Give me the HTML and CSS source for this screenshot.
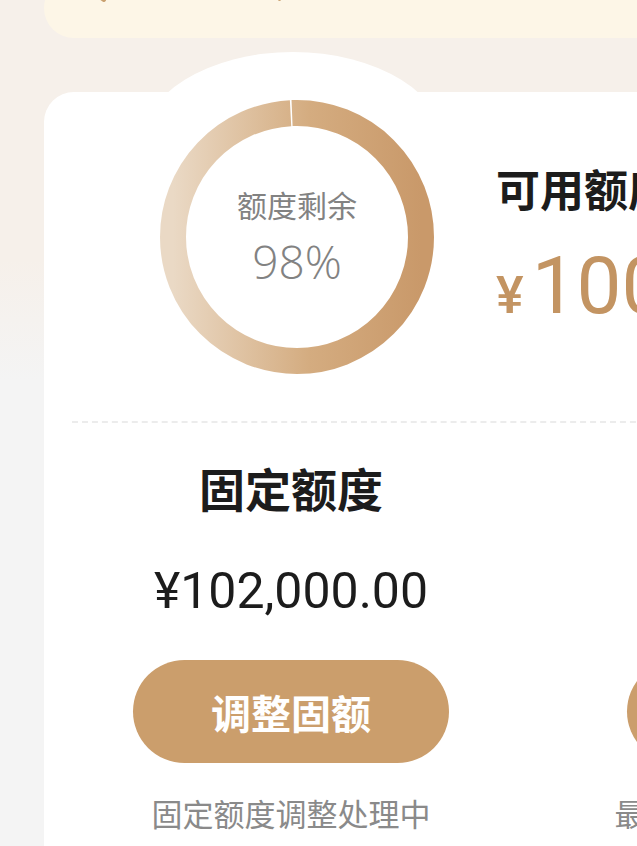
FILE: index.html
```html
<!DOCTYPE html>
<html lang="zh-CN">
<head>
  <meta charset="UTF-8"/>
  <title>额度管理</title>
  <link rel="stylesheet" href="styles.css">
</head>
<body>

  <div class="page">
    <div class="notice">
      <svg class="notice-icon" width="20" height="14" viewBox="0 0 20 14">
        <path d="M2 2 L11 8" stroke="#c9a06f" stroke-width="4" stroke-linecap="round" fill="none"/>
      </svg>
      <span class="notice-dot"></span>
    </div>

    <div class="card-wrap">
      <div class="card-bump"></div>
      <div class="card">
        <div class="summary">
          <div class="ring">
            <svg width="274" height="274" viewBox="0 0 274 274">
              <defs>
                <linearGradient id="ringGrad" gradientUnits="userSpaceOnUse" x1="13" y1="0" x2="261" y2="0">
                  <stop offset="0" stop-color="#ead9c5"/>
                  <stop offset="0.55" stop-color="#d4ac80"/>
                  <stop offset="1" stop-color="#c9996a"/>
                </linearGradient>
              </defs>
              <circle cx="137" cy="137" r="124" fill="none" stroke="url(#ringGrad)" stroke-width="26"
                      stroke-dasharray="777.6 1.5" stroke-dashoffset="200"/>
            </svg>
            <div class="ring-text">
              <div class="ring-label">额度剩余</div>
              <div class="ring-value">98%</div>
            </div>
          </div>
          <div class="available">
            <div class="available-title">可用额度</div>
            <div class="available-amount"><span class="yen">¥</span>100,000.00</div>
          </div>
        </div>

        <div class="divider"></div>

        <div class="limits">
          <div class="limit">
            <div class="limit-title">固定额度</div>
            <div class="limit-amount">¥102,000.00</div>
            <button class="limit-btn">调整固额</button>
            <div class="limit-note">固定额度调整处理中</div>
          </div>
          <div class="limit">
            <div class="limit-title">临时额度</div>
            <div class="limit-amount">¥0.00</div>
            <button class="limit-btn">申请临额</button>
            <div class="limit-note">最快一个工作日完成审核</div>
          </div>
        </div>
      </div>
    </div>
  </div>

</body>
</html>
```

FILE: styles.css
```css
html, body {
  margin: 0;
  padding: 0;
}

body {
  width: 637px;
  height: 846px;
  overflow: hidden;
  font-family: "Noto Sans CJK SC", "Noto Sans", sans-serif;
  background: linear-gradient(180deg, #f6f0ea 0px, #f6f0ea 260px, #f4f4f4 380px);
}

.page {
  width: 1100px;
  padding-left: 44px;
}

.notice {
  position: relative;
  height: 60px;
  margin-top: -22px;
  background: #fdf6e7;
  border-radius: 30px;
}

.notice-icon {
  position: absolute;
  left: 49px;
  top: 14px;
}

.notice-dot {
  position: absolute;
  left: 234px;
  top: 20px;
  width: 3px;
  height: 3px;
  border-radius: 50%;
  background: #c9a06f;
}

.card-wrap {
  position: relative;
  margin-top: 54px;
}

.card-bump {
  position: absolute;
  left: 96px;
  top: -40px;
  width: 306px;
  height: 190px;
  border-radius: 50%;
  background: #fff;
}

.card {
  position: relative;
  background: #fff;
  border-radius: 30px;
  min-height: 800px;
}

.summary {
  display: flex;
  align-items: flex-start;
  padding: 8px 0 0 116px;
}

.ring {
  position: relative;
  width: 274px;
  height: 274px;
}

.ring svg {
  display: block;
}

.ring-text {
  position: absolute;
  left: 0;
  right: 0;
  top: 0;
  bottom: 0;
  display: flex;
  flex-direction: column;
  align-items: center;
  justify-content: center;
  color: #828282;
  padding-top: 2px;
  box-sizing: border-box;
}

.ring-label {
  font-size: 30px;
  line-height: 40px;
}

.ring-value {
  font-family: "Open Sans", sans-serif;
  font-size: 46px;
  font-weight: 300;
  line-height: 62px;
  margin-top: 6px;
}

.available {
  margin-left: 62px;
  padding-top: 58px;
}

.available-title {
  font-size: 44px;
  font-weight: 700;
  line-height: 60px;
  color: #1c1c1c;
}

.available-amount {
  margin-top: 23px;
  font-family: Roboto, sans-serif;
  font-size: 80px;
  line-height: 90px;
  color: #c39462;
}

.yen {
  font-size: 52px;
  font-weight: 500;
  margin-right: 8px;
}

.divider {
  margin: 47px 0 0 28px;
  border-top: 2px dashed #ececec;
}

.limits {
  display: grid;
  grid-template-columns: 494px 494px;
}

.limit {
  display: flex;
  flex-direction: column;
  align-items: center;
  padding-top: 34px;
}

.limit-title {
  font-size: 46px;
  font-weight: 700;
  line-height: 60px;
  color: #1c1c1c;
}

.limit-amount {
  margin-top: 44px;
  font-family: Roboto, sans-serif;
  font-size: 50px;
  line-height: 60px;
  color: #1c1c1c;
}

.limit-btn {
  margin-top: 39px;
  width: 316px;
  height: 103px;
  border: none;
  border-radius: 52px;
  background: #cb9e6c;
  color: #fff;
  font-family: "Noto Sans CJK SC", sans-serif;
  font-size: 40px;
  font-weight: 700;
  cursor: pointer;
}

.limit-note {
  margin-top: 28px;
  font-size: 31px;
  line-height: 44px;
  color: #8a8a8a;
}
```
